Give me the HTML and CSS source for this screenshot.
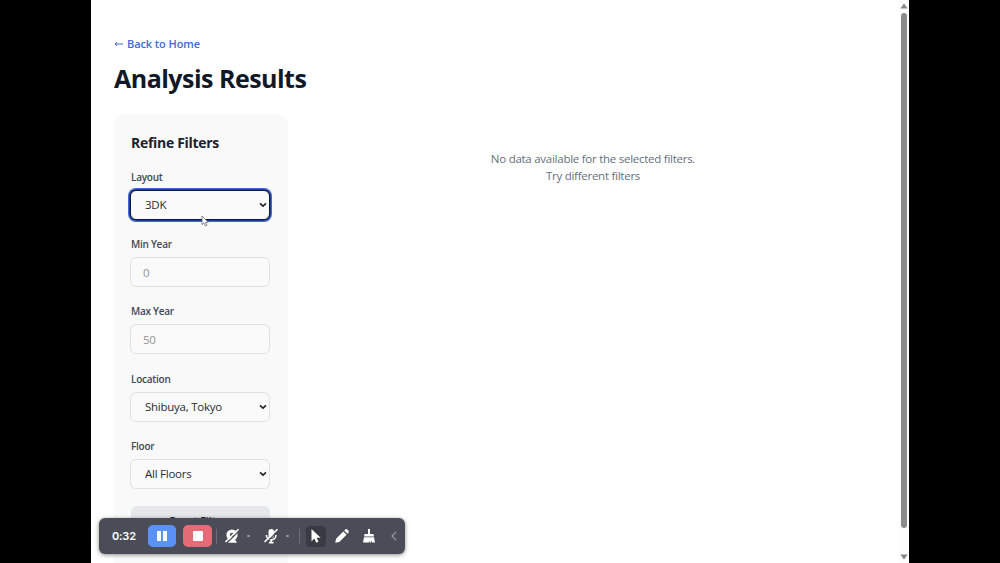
FILE: index.html
```html
<!DOCTYPE html>
<html lang="en">
<head>
  <meta charset="UTF-8">
  <meta name="viewport" content="width=device-width, initial-scale=1.0">
  <title>Analysis Results</title>
  <link rel="stylesheet" href="styles.css">
</head>
<body>
  <div class="screen">
    <main class="page">
      <a class="back" href="#"><svg width="10" height="8" viewBox="0 0 10 8"><path d="M9 4H1M3 2.2L1 4l2 1.8"/></svg><span>Back to Home</span></a>
      <h1><span>Analysis Results</span></h1>
      <div class="content">
        <aside class="filters">
          <h2><span>Refine Filters</span></h2>
          <div class="field">
            <label for="layout">Layout</label>
            <div class="select focused">
              <select id="layout"><option>3DK</option></select>
              <svg class="chevron" viewBox="0 0 8 6"><path d="M1 1.3l3 2.8 3-2.8"/></svg>
            </div>
          </div>
          <div class="field">
            <label for="minYear">Min Year</label>
            <input type="text" id="minYear" placeholder="0">
          </div>
          <div class="field">
            <label for="maxYear">Max Year</label>
            <input type="text" id="maxYear" placeholder="50">
          </div>
          <div class="field">
            <label for="location">Location</label>
            <div class="select">
              <select id="location"><option>Shibuya, Tokyo</option></select>
              <svg class="chevron" viewBox="0 0 8 6"><path d="M1 1.3l3 2.8 3-2.8"/></svg>
            </div>
          </div>
          <div class="field">
            <label for="floor">Floor</label>
            <div class="select">
              <select id="floor"><option>All Floors</option></select>
              <svg class="chevron" viewBox="0 0 8 6"><path d="M1 1.3l3 2.8 3-2.8"/></svg>
            </div>
          </div>
          <button class="reset">Reset Filters</button>
        </aside>
        <section class="results">
          <p>No data available for the selected filters.</p>
          <p>Try different filters</p>
        </section>
      </div>
    </main>
    <div class="scrollbar">
      <svg width="8" height="6" viewBox="0 0 8 6"><path d="M4 0.5L7.6 5.5H0.4z"/></svg>
      <div class="thumb"></div>
      <svg width="8" height="6" viewBox="0 0 8 6"><path d="M4 5.5L7.6 0.5H0.4z"/></svg>
    </div>
  </div>

  <svg class="cursor" viewBox="0 0 8 12"><path d="M1 1v8.6l2-1.8 1.4 3.2 1.5-.7-1.4-3h2.7z"/></svg>

  <div class="recorder">
    <span class="time">0:32</span>
    <button class="rec pause"><svg width="12" height="12" viewBox="0 0 12 12"><path d="M1 1h4v10H1zM7 1h4v10H7z"/></svg></button>
    <button class="rec stop"><svg width="12" height="12" viewBox="0 0 12 12"><rect x="1" y="1" width="10" height="10" rx="1"/></svg></button>
    <i class="divider"></i>
    <svg class="tool camera" width="16" height="16" viewBox="0 0 16 16"><circle cx="8" cy="7" r="5.6"/><path d="M3.5 14.8h9.5l-2-3.3H6z"/><circle class="cut" cx="8" cy="7" r="2.2"/><path class="gap" d="M2.8 15L15.2 2.8"/><path class="slash" d="M1.5 14L14.5 1.2"/></svg>
    <i class="dot"></i>
    <svg class="tool mic" width="16" height="16" viewBox="0 0 16 16"><rect x="5.5" y="1" width="5.5" height="9" rx="2.7"/><path class="line" d="M3.4 7a4.8 4.8 0 0 0 9.6 0M8.2 12v3M6 14.6h4.5"/><path class="gap" d="M2.8 15L15.2 2.8"/><path class="slash" d="M1.5 14L14.5 1.2"/></svg>
    <i class="dot"></i>
    <i class="divider"></i>
    <div class="pointer"><svg width="14" height="16" viewBox="0 0 14 16"><path d="M2.5 1v12.2l2.9-2.6 1.9 4.2 2.2-1-1.9-4.1h4z"/></svg></div>
    <svg class="tool pencil" width="16" height="16" viewBox="0 0 16 16"><path d="M1.2 14.8l.9-4.1L9.3 3.5l3.2 3.2-7.2 7.2zM10.2 2.6l1-1q1.2-1 2.3.1l.8.8q1.1 1.1.1 2.3l-1 1z"/></svg>
    <svg class="tool broom" width="16" height="16" viewBox="0 0 16 16"><path d="M7 1.2q1-.9 2 0V6h2.8q1 0 1 1v1.4H3.2V7q0-1 1-1H7zM3 9.3h10l1 5.2h-3l-.5-2-.6 2H8.6l-.4-2-.5 2H2z"/></svg>
    <svg class="collapse" width="8" height="10" viewBox="0 0 8 10"><path d="M6 1L2 5l4 4"/></svg>
  </div>
</body>
</html>
```

FILE: styles.css
```css
* {
  box-sizing: border-box;
}
body {
  margin: 0;
  height: 563px;
  overflow: hidden;
  background: #000;
  color: #111827;
  font-family: "Open Sans", "Noto Sans", sans-serif;
}
h1, h2, p {
  margin: 0;
}
.screen {
  display: flex;
  width: 818px;
  height: 563px;
  margin-left: 91px;
  overflow: hidden;
  background: #fff;
}
.page {
  flex: 1;
  padding: 35px 22px 0 23px;
}
.back {
  display: flex;
  align-items: center;
  gap: 3px;
  height: 17px;
  color: #4169d8;
  font-size: 11px;
  font-weight: 600;
  letter-spacing: -0.08px;
  text-decoration: none;
}
.back svg {
  fill: none;
  stroke: #4169d8;
}
h1 {
  height: 34px;
  margin-top: 9px;
  font-size: 25px;
  line-height: 34px;
  font-weight: 700;
  letter-spacing: -0.52px;
  white-space: nowrap;
}
.content {
  display: flex;
  gap: 22px;
  margin-top: 20px;
}
.filters {
  width: 174px;
  height: 470px;
  padding: 17px 18px 0 17px;
  border-radius: 9px;
  background: #f9f9fa;
}
h2 {
  height: 22px;
  color: #1c222c;
  font-size: 14px;
  line-height: 22px;
  font-weight: 700;
  letter-spacing: -0.3px;
}
.field {
  height: 67.3px;
  padding-top: 14.8px;
}
label {
  display: block;
  height: 16px;
  margin-bottom: 5px;
  color: #424853;
  font-size: 10px;
  line-height: 16px;
  font-weight: 600;
  letter-spacing: -0.25px;
}
input, select {
  display: block;
  width: 140px;
  height: 30px;
  margin-left: -1px;
  padding: 0 12px;
  border: 1px solid #dfe1e4;
  border-radius: 6px;
  outline: none;
  background: #fafafa;
  color: #2c2c2e;
  font-family: inherit;
  font-size: 11.5px;
  letter-spacing: -0.25px;
}
select {
  appearance: none;
  padding-left: 14px;
}
input::placeholder {
  color: #929292;
}
.select {
  position: relative;
}
.focused select {
  border-color: #101838;
  box-shadow: 0 0 0 0.5px #101838, 0 0 0 2px #3f66dc;
}
.chevron {
  position: absolute;
  top: 12px;
  right: 3px;
  width: 8px;
  height: 6px;
  fill: none;
  stroke: #222;
  stroke-width: 1.6;
}
.reset {
  display: block;
  width: 139px;
  height: 30px;
  margin-top: 16px;
  padding: 0;
  border: none;
  border-radius: 6px;
  background: #e5e7eb;
  color: #1f2937;
  font-family: inherit;
  font-size: 10.5px;
  line-height: 29px;
  font-weight: 600;
}
.results {
  flex: 1;
  padding-top: 35px;
  padding-right: 1px;
  color: #66707c;
  font-size: 11.5px;
  line-height: 17.4px;
  letter-spacing: -0.26px;
  text-align: center;
}
.scrollbar {
  display: flex;
  flex-direction: column;
  align-items: center;
  justify-content: space-between;
  width: 10px;
  padding: 3px 0;
  background: #fcfcfc;
}
.scrollbar svg {
  flex: none;
  fill: #858585;
}
.thumb {
  width: 6px;
  height: 515px;
  margin-bottom: 23px;
  border-radius: 3px;
  background: #8b8b8b;
}
.cursor {
  position: absolute;
  left: 201px;
  top: 215px;
  width: 8px;
  height: 12px;
  fill: #fff;
  stroke: #666b78;
  stroke-width: 0.8;
}

/* screen recorder bar */
.recorder {
  position: absolute;
  left: 99px;
  top: 518px;
  display: flex;
  align-items: center;
  width: 306px;
  height: 36px;
  padding-left: 13px;
  border-radius: 6px;
  background: #4a4d58;
  box-shadow: 0 1px 4px rgba(0, 0, 0, 0.45);
}
.recorder svg {
  flex: none;
  fill: #fff;
}
.time {
  width: 36px;
  color: #fff;
  font-family: Inter, sans-serif;
  font-size: 11px;
  font-weight: 600;
  letter-spacing: -0.2px;
}
.rec {
  display: flex;
  align-items: center;
  justify-content: center;
  width: 28px;
  height: 22px;
  padding: 0;
  border: none;
  border-radius: 5px;
}
.pause {
  background: #5b92f8;
}
.stop {
  width: 29px;
  margin-left: 7px;
  background: #e56b76;
}
.divider {
  width: 1px;
  height: 15px;
  margin-left: 4px;
  background: #6b6e78;
}
.camera {
  margin-left: 7px;
}
.recorder .cut {
  fill: #4a4d58;
}
.gap {
  stroke: #4a4d58;
  stroke-width: 1.2;
}
.slash, .recorder .line {
  fill: none;
  stroke: #fff;
  stroke-width: 1.6;
}
.dot {
  width: 3px;
  height: 2px;
  margin-left: 7px;
  border-radius: 1px;
  background: #9b9da5;
}
.mic {
  margin-left: 13px;
}
.mic + .dot + .divider {
  margin-left: 10px;
}
.pointer {
  display: flex;
  align-items: center;
  justify-content: center;
  width: 20px;
  height: 21px;
  margin-left: 6px;
  border-radius: 4px;
  background: #393b43;
}
.pencil {
  margin-left: 8px;
}
.broom {
  margin-left: 11px;
}
.recorder .collapse {
  margin-left: 13px;
  fill: none;
  stroke: #92949d;
  stroke-width: 1.3;
}
```
